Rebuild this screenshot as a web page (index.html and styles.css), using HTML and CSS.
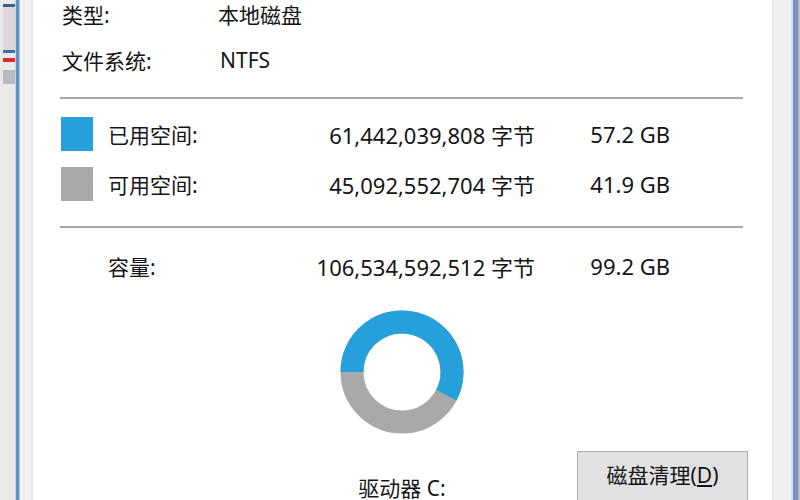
FILE: index.html
```html
<!DOCTYPE html>
<html lang="zh-CN">
<head>
<meta charset="utf-8">
<title>本地磁盘 属性</title>
<link rel="stylesheet" href="styles.css">
</head>
<body>
<div class="window">
  <div class="chrome-left">
    <div class="marks">
      <span class="mark m-dark"></span>
      <span class="mark m-pale"></span>
      <span class="mark m-blue"></span>
      <span class="mark m-red"></span>
      <span class="mark m-gray"></span>
    </div>
    <div class="edge-blue"></div>
    <div class="edge-light"></div>
  </div>

  <div class="panel">
    <div class="info-row first">
      <span class="info-label">类型:</span>
      <span class="info-value">本地磁盘</span>
    </div>
    <div class="info-row second">
      <span class="info-label">文件系统:</span>
      <span class="info-value latin">NTFS</span>
    </div>

    <div class="rule rule-one"></div>

    <div class="space-grid used-row">
      <span class="swatch swatch-used"></span>
      <span class="space-label">已用空间:</span>
      <span class="space-bytes">61,442,039,808 字节</span>
      <span class="space-gb">57.2 GB</span>
    </div>
    <div class="space-grid free-row">
      <span class="swatch swatch-free"></span>
      <span class="space-label">可用空间:</span>
      <span class="space-bytes">45,092,552,704 字节</span>
      <span class="space-gb">41.9 GB</span>
    </div>

    <div class="rule rule-two"></div>

    <div class="space-grid total-row">
      <span class="swatch-empty"></span>
      <span class="space-label">容量:</span>
      <span class="space-bytes">106,534,592,512 字节</span>
      <span class="space-gb">99.2 GB</span>
    </div>

    <div class="chart-area">
      <div class="chart-col">
        <svg class="donut" width="124" height="124" viewBox="0 0 124 124">
          <circle cx="62" cy="62" r="50" fill="none" stroke="#a9a9a9" stroke-width="23"/>
          <path d="M12 62 A50 50 0 1 1 106.3 85.2" fill="none" stroke="#26a0da" stroke-width="23"/>
        </svg>
        <div class="drive-label">驱动器 C:</div>
      </div>
      <div class="cleanup-btn">磁盘清理(<u>D</u>)</div>
    </div>
  </div>

  <div class="chrome-right">
    <div class="r-light"></div>
    <div class="r-cyan"></div>
    <div class="r-blue"></div>
    <div class="r-gray"></div>
  </div>
</div>
</body>
</html>
```

FILE: styles.css
```css
html, body {
  margin: 0;
  padding: 0;
  width: 800px;
  height: 500px;
  overflow: hidden;
  background: #ffffff;
}

body {
  font-family: "Noto Sans", "Noto Sans CJK SC", sans-serif;
  font-size: 21px;
  color: #151515;
}

.window {
  display: flex;
  width: 800px;
  height: 500px;
}

/* left window chrome */
.chrome-left {
  display: flex;
  width: 33px;
  flex: none;
  background: #f2f2f2;
}

.marks {
  width: 12px;
  padding: 0 0 0 3px;
  background: #ebe8e8;
  border-right: 1px solid #c9d4e0;
  display: flex;
  flex-direction: column;
}

.mark {
  display: block;
  width: 12px;
  flex: none;
}
.m-dark { margin-top: 4px; height: 3px; background: #3b5f8c; }
.m-pale { height: 43px; background: #ddd6da; }
.m-blue { height: 3px; background: #3d6fa0; }
.m-red { margin-top: 5px; height: 4px; background: #e0262e; }
.m-gray { margin-top: 8px; height: 14px; background: #b9b9c0; }

.edge-blue {
  width: 3px;
  background: #5a8fc8;
  border-right: 1px solid #a9c8e6;
}

.edge-light {
  flex: 1;
  background: #f1f0f0;
  border-right: 2px solid #e6e6ea;
}

/* right window chrome */
.chrome-right {
  display: flex;
  width: 28px;
  flex: none;
}
.r-light {
  width: 18px;
  background: #eef0f2;
  border-left: 1px solid #e2e2e2;
}
.r-cyan { width: 2px; background: #c5e6ef; }
.r-blue { width: 5px; background: #7d90b8; }
.r-gray { flex: 1; background: #b9bcc6; }

/* panel */
.panel {
  flex: 1;
  background: #ffffff;
  display: flex;
  flex-direction: column;
  overflow: hidden;
}

.panel > * {
  flex: none;
}

.info-row {
  display: flex;
  align-items: center;
  height: 28px;
  padding-left: 29px;
}
.info-row.second { margin-top: 18px; }

.info-label {
  width: 156px;
}
.info-value.latin {
  padding-left: 2px;
}

.rule {
  height: 2px;
  background: #a7a7a7;
  margin-left: 27px;
  width: 683px;
}
.rule-one { margin-top: 23px; }
.rule-two { margin-top: 25px; }

.space-grid {
  display: grid;
  grid-template-columns: 47px 150px 277px 135px;
  align-items: center;
  height: 34px;
  padding-left: 28px;
}
.used-row { margin-top: 18px; }
.free-row { margin-top: 16px; }
.total-row { margin-top: 21px; }

.swatch {
  display: block;
  width: 32px;
  height: 34px;
}
.swatch-used { background: #26a0da; }
.swatch-free { background: #a9a9a9; }

.space-bytes,
.space-gb {
  text-align: right;
  font-size: 22px;
}

/* chart */
.chart-area {
  display: flex;
  align-items: flex-start;
  margin-top: 27px;
  padding-left: 269px;
}

.chart-col {
  width: 200px;
  display: flex;
  flex-direction: column;
  align-items: center;
}

.donut {
  display: block;
}

.drive-label {
  margin-top: 43px;
  line-height: 22px;
  height: 22px;
}

.cleanup-btn {
  margin-top: 141px;
  margin-left: 75px;
  width: 171px;
  height: 60px;
  box-sizing: border-box;
  border: 1px solid #adadad;
  background: #e1e1e1;
  text-align: center;
  padding-top: 9px;
  line-height: 28px;
}
.cleanup-btn u {
  text-underline-offset: 2px;
}
```
